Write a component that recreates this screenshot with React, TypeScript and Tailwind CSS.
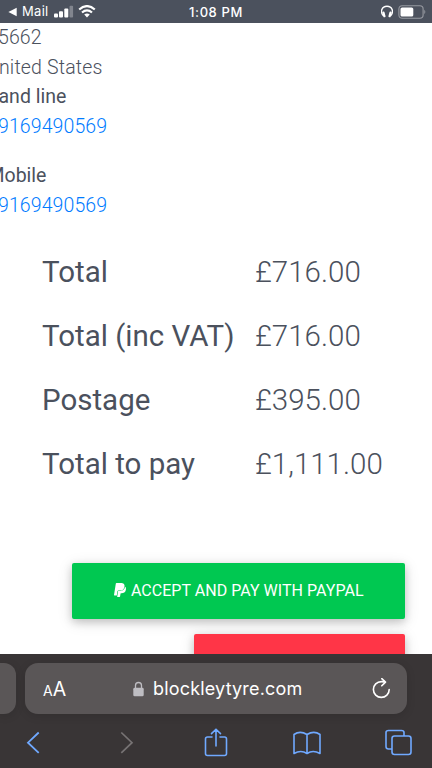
import { FaPaypal } from "react-icons/fa";

const totals = [
  { label: "Total", amount: "£716.00" },
  { label: "Total (inc VAT)", amount: "£716.00" },
  { label: "Postage", amount: "£395.00" },
  { label: "Total to pay", amount: "£1,111.00" },
];

function StatusBar() {
  return (
    <header className="relative flex h-[23px] shrink-0 items-center justify-between bg-[#4b515d] pr-[6px] pl-[8px] font-['Inter','Liberation_Sans',sans-serif] text-white">
      <div className="flex items-center">
        <svg width="9" height="10" viewBox="0 0 9 10" fill="currentColor"><path d="M.4 5 8.700 .7v8.600z" /></svg>
        <span className="ml-[5px] text-[13px] leading-[23px] tracking-[0.3px]">Mail</span>
        <svg className="ml-[5px]" width="20" height="14" viewBox="0 0 20 14" fill="currentColor">
          <rect x="0" y="8.5" width="4" height="4" rx="1" />
          <rect x="5" y="6.2" width="4" height="6.3" rx="1" />
          <rect x="10.3" y="3.5" width="4" height="9" rx="1" />
          <rect x="15.5" y="0.7" width="3.6" height="11.8" rx="1" opacity=".3" />
        </svg>
        <svg className="ml-[4px]" width="18" height="13" viewBox="0 0 18 13" fill="none" stroke="currentColor" strokeWidth="2.2">
          <path d="M1.2 4.5Q9-2.3 16.8 4.5" />
          <path d="M4 7.5Q9 3.2 14 7.5" />
          <path d="M9 12.4 6.2 9.6Q9 7.4 11.8 9.6z" fill="currentColor" stroke="none" />
        </svg>
      </div>
      <div className="absolute inset-x-0 text-center text-[13px] leading-[24px] font-medium tracking-[0.600px]">1:08 PM</div>
      <div className="flex items-center">
        <svg width="12" height="13" viewBox="0 0 12 13" fill="none" stroke="currentColor">
          <path d="M2.6 11C-1.5 6.5 1 1.3 6 1.3S13.500 6.500 9.400 11" strokeWidth="1.4" />
          <path d="m2.500 7.700.900 3.500M9.500 7.700l-.9 3.500" strokeWidth="2.300" strokeLinecap="round" />
        </svg>
        <svg className="ml-[5px]" width="28" height="14" viewBox="0 0 28 14" fill="none">
          <rect x=".9" y=".8" width="24.200" height="12.400" rx="3.200" stroke="#979aa1" strokeWidth="1.100" />
          <rect x="2.500" y="2.500" width="12.800" height="9" rx="1.600" fill="white" />
          <path d="M26.300 4.800q2 2.200 0 4.400z" fill="#979aa1" />
        </svg>
      </div>
    </header>
  );
}

function Contact() {
  return (
    <section className="text-[19.500px] leading-[29.500px] whitespace-nowrap">
      <p className="-ml-[2px] font-light tracking-[0.100px]">5662</p>
      <p className="-ml-[14px] font-light tracking-[0.160px]">United States</p>
      <p className="-ml-[12px]">Land line</p>
      <p className="-ml-[2px] font-light tracking-[0.100px] text-[#007bff]">9169490569</p>
      <p className="-ml-[12.500px] mt-[20px]">Mobile</p>
      <p className="-ml-[2px] font-light tracking-[0.100px] text-[#007bff]">9169490569</p>
    </section>
  );
}

function AddressBar() {
  return (
    <div className="flex h-[51px] gap-[9px]">
      <div className="w-[16px] rounded-r-[12px] bg-[#5a5657] shadow-[0_2px_10px_rgba(0,0,0,0.12)]" />
      <div className="flex w-[382px] items-center rounded-[13px] bg-[#5a5657] pr-[16px] pl-[18px] text-white shadow-[0_2px_10px_rgba(0,0,0,0.12)]">
        <span className="w-[90px] pt-[2px] text-[19.500px] leading-none"><span className="text-[14px]">A</span>A</span>
        <svg width="11" height="16" viewBox="0 0 11 16" fill="none">
          <path d="M2.500 8V4.500a3 3 0 0 1 6 0V8" stroke="#bebdc2" strokeWidth="1.300" />
          <rect x=".3" y="6.800" width="10.400" height="8.500" rx="1.400" fill="#bebdc2" />
        </svg>
        <span className="ml-[9px] text-[18px] leading-[24px] tracking-[0.180px]">blockleytyre.com</span>
        <svg className="ml-auto" width="19" height="22" viewBox="0 0 19 22" fill="none" stroke="currentColor" strokeWidth="1.600" strokeLinecap="round" strokeLinejoin="round">
          <path d="M17.200 11.500a7.900 7.900 0 1 1-7.900-7.900q2 0 3.600.3M9.800.700l3.700 3.400-3.700 3.700" />
        </svg>
      </div>
    </div>
  );
}

function Toolbar() {
  return (
    <nav className="mt-[14px] flex items-start pl-[26px] text-[#70a9ff]">
      <svg width="14" height="30" viewBox="0 0 14 30" fill="none" stroke="currentColor" strokeWidth="1.800"><path d="M12.700 4.500 2 14.700l10.700 10.200" /></svg>
      <svg className="ml-[80px] text-[#777374]" width="14" height="30" viewBox="0 0 14 30" fill="none" stroke="currentColor" strokeWidth="1.700"><path d="m1.300 4.500 10.700 10.200L1.300 24.900" /></svg>
      <svg className="ml-[70px]" width="24" height="30" viewBox="0 0 24 30" fill="none" stroke="currentColor" strokeWidth="1.600" strokeLinecap="round" strokeLinejoin="round">
        <path d="M8 9H3.500Q1.500 9 1.500 11v14.500q0 2 2 2h17q2 0 2-2V11q0-2-2-2H16M12 18V1.200M7.500 5.600 12 1.200l4.500 4.400" />
      </svg>
      <svg className="ml-[64.500px]" width="28" height="30" viewBox="0 0 28 30" fill="none" stroke="currentColor" strokeWidth="1.600" strokeLinejoin="round">
        <path d="M14 25.500Q8 21.500 1 25.500V6.500Q7 2.200 14 6.500Q21 2.200 27 6.500v19Q20 21.500 14 25.500V6.500" />
      </svg>
      <svg className="ml-[64px]" width="27" height="30" viewBox="0 0 27 30" fill="none" stroke="currentColor" strokeWidth="1.600">
        <path d="M7 21H3.500Q1 21 1 18.500v-14Q1 2.500 3.500 2.500h13Q19 2.500 19 4.500V8" />
        <rect x="7" y="8" width="19" height="18.500" rx="2.500" />
      </svg>
    </nav>
  );
}

export default function App() {
  return (
    <div className="flex h-[768px] w-[432px] flex-col overflow-hidden bg-white font-['Roboto','Liberation_Sans',sans-serif] text-[#4b515d]">
      <StatusBar />
      <main className="h-[631px] shrink-0 overflow-hidden">
        <Contact />
        <dl className="mt-[19.500px] ml-[42px] grid grid-cols-[213px_1fr] auto-rows-[64.200px] text-[29.500px] leading-[64px] whitespace-nowrap">
          {totals.map((row) => (
            <div key={row.label} className="contents">
              <dt>{row.label}</dt>
              <dd className="font-light">{row.amount}</dd>
            </div>
          ))}
        </dl>
        <div className="mt-[66.300px] mr-[27px] flex flex-col items-end gap-[15.500px]">
          <button className="flex h-[56px] w-[333px] items-center justify-center gap-[3.500px] rounded-[2px] bg-[#00c851] text-[16px] tracking-[0.030px] text-white shadow-[0_3px_8px_rgba(0,0,0,0.18),0_3px_16px_rgba(0,0,0,0.12)]">
            <FaPaypal className="-mt-[2px] h-[16px] w-[14px]" />
            <span>ACCEPT AND PAY WITH PAYPAL</span>
          </button>
          <div className="h-[56px] w-[211px] rounded-[2px] bg-[#ff3547] shadow-[0_3px_8px_rgba(0,0,0,0.18),0_3px_16px_rgba(0,0,0,0.12)]" />
        </div>
      </main>
      <footer className="h-[114px] shrink-0 bg-[#393536] pt-[9px] font-['Inter','Liberation_Sans',sans-serif]">
        <AddressBar />
        <Toolbar />
      </footer>
    </div>
  );
}
